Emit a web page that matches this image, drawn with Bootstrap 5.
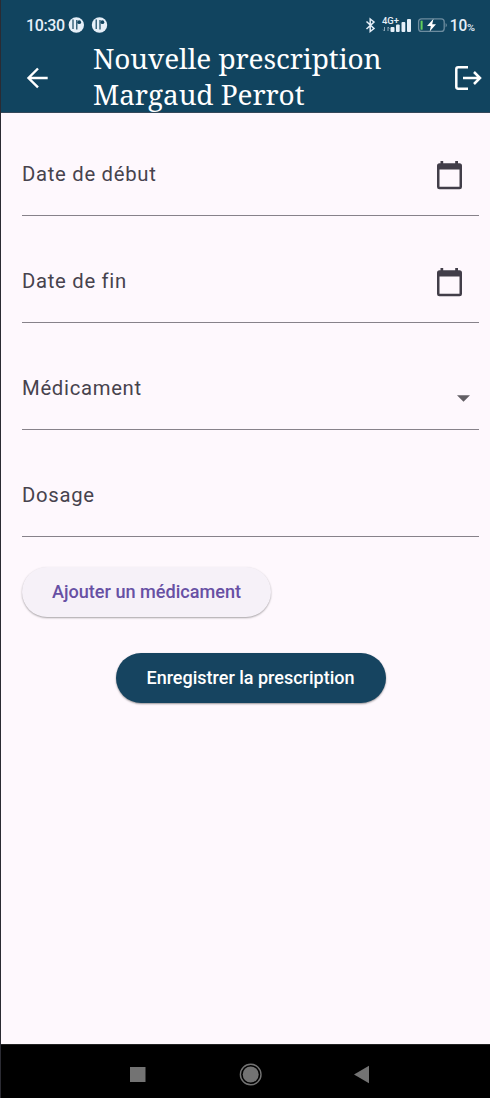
<!DOCTYPE html>
<html lang="fr">
<head>
<meta charset="utf-8">
<meta name="viewport" content="width=device-width, initial-scale=1">
<title>Nouvelle prescription</title>
<link href="https://cdn.jsdelivr.net/npm/bootstrap@5.3.0/dist/css/bootstrap.min.css" rel="stylesheet">
<style>
  body { background: #fef8fd; font-family: Roboto, "Liberation Sans", sans-serif; }
  .screen { height: 1098px; border-left: 1px solid #2b2b33; overflow: hidden; }
  .app-header { background: #11445f; height: 113px; color: #fff; border-bottom: 1px solid #34485a; }
  .status { height: 42px; padding: 9px 15px 0 25px; color: #e6eff8; font-size: 16px; font-weight: 500; line-height: 34px; }
  .clock { width: 42px; white-space: nowrap; letter-spacing: -.4px; }
  .toolbar { height: 70px; padding-left: 23px; padding-right: 8px; }
  .app-title { font-family: "Noto Serif", "DejaVu Serif Condensed", "DejaVu Serif", serif; font-stretch: condensed; font-size: 28px; line-height: 36px; letter-spacing: -.08px; font-weight: 400; margin: -2px 0 0 43px; white-space: nowrap; }
  form { padding: 21px 11px 0 21px; }
  .field { height: 82px; margin-bottom: 25px; border-bottom: 1.5px solid #87828a; color: #47434d; }
  .field label { font-size: 20.3px; line-height: 28px; letter-spacing: .7px; margin-top: -1px; }
  .date-icon { margin-right: 15.5px; }
  .caret { margin: 20px 9px 0 0; }
  .pill { border: 0; border-radius: 26px; height: 50px; padding: 0; font-weight: 500; line-height: 50px; white-space: nowrap; }
  .pill-add { width: 249px; margin-top: 30px; font-size: 18.1px; background: #f6f1f8; color: #6750a4; box-shadow: 0 1px 2px rgba(0,0,0,.35); }
  .pill-save { width: 270px; margin: 36px 0 0; font-size: 18px; background: #164460; color: #fff; box-shadow: 0 1px 2px rgba(0,0,0,.4); }
  .nav-keys { height: 54px; background: #000; border-top: 1px solid #222; }
</style>
</head>
<body>
<div class="screen d-flex flex-column">
  <header class="app-header flex-shrink-0">
    <div class="status d-flex">
      <span class="clock">10:30</span>
      <svg width="40" height="34" viewBox="0 0 40 34" fill="#e6eff8">
        <circle cx="8.3" cy="16" r="7.7"/><circle cx="31.5" cy="16" r="7.7"/>
        <g fill="none" stroke="#11445f" stroke-width="1.2"><path d="M5 10.5V20M8.8 11V20.5M28.2 10.5V20M32 11V20.5"/></g>
        <g fill="#11445f"><circle cx="11.2" cy="13.2" r="1.9"/><circle cx="34.4" cy="13.2" r="1.9"/></g>
      </svg>
      <svg class="ms-auto" width="84" height="34" viewBox="365 9 84 34">
        <path d="M366.5 21.5L374 28.5L370.2 31.5V19L374 22L366.5 29" fill="none" stroke="#e6eff8" stroke-width="1.5"/>
        <text x="382" y="23.8" font-size="9" font-weight="500" textLength="17" lengthAdjust="spacingAndGlyphs" fill="#e6eff8">4G+</text>
        <path d="M384.5 27V31M383.2 29.7L384.5 31M388 31V27M388 27L389.3 28.5" stroke="#8ca6b7" fill="none"/>
        <g fill="#e6eff8"><rect x="390.5" y="27" width="4" height="5" rx="1"/><rect x="396" y="24.5" width="3.7" height="7.5" rx="1"/><rect x="401.5" y="22" width="3.8" height="10" rx="1"/><rect x="407" y="19" width="4" height="13" rx="1"/></g>
        <rect x="418.6" y="18.8" width="25.6" height="12.6" rx="3" fill="none" stroke="#6d8c9f" stroke-width="1.3"/>
        <rect x="420.6" y="20.7" width="2" height="9" fill="#62cf5c"/>
        <path d="M445.7 23Q447.8 25 445.7 27.5Z" fill="#7f9bac"/>
        <path d="M433.5 18.8L427 26H430.8L429.7 31.6L436 24.2H432.2Z" fill="#fff"/>
      </svg>
      <svg width="26" height="34" viewBox="449 9 26 34" fill="#e6eff8" font-weight="500"><text x="449.8" y="31.2" font-size="17" textLength="17.5" lengthAdjust="spacingAndGlyphs">10</text><text x="467" y="31.2" font-size="9.5" textLength="8" lengthAdjust="spacingAndGlyphs">%</text></svg>
    </div>
    <div class="toolbar d-flex align-items-center">
      <svg width="26" height="26" viewBox="0 0 26 26" fill="none" stroke="#fff" stroke-width="2.4"><path d="M23.7 14H4.5M14 4.5L4.5 14L14 23.3"/></svg>
      <h1 class="app-title">Nouvelle prescription<br>Margaud Perrot</h1>
      <svg class="ms-auto" width="28" height="26" viewBox="0 0 28 26" fill="none" stroke="#fff" stroke-width="2.5"><path d="M14 3.3H4.2Q2.3 3.3 2.3 5.2V22.8Q2.3 24.7 4.2 24.7H14M9 14H26M20 8L26 14L20 20"/></svg>
    </div>
  </header>
  <form class="flex-grow-1">
    <div class="field d-flex align-items-center justify-content-between">
      <label>Date de début</label>
      <svg class="date-icon" width="29" height="30" viewBox="0 0 29 30" fill="#423e49"><path fill-rule="evenodd" d="M5.5 1H8.2V3.2H20.2V1H23V3.2H24.5Q27 3.2 27 5.7V27Q27 29.3 24.5 29.3H4.5Q2 29.3 2 27V5.7Q2 3.2 4.5 3.2H5.5ZM4.5 9.5V26.8H24.5V9.5Z"/></svg>
    </div>
    <div class="field d-flex align-items-center justify-content-between">
      <label>Date de fin</label>
      <svg class="date-icon" width="29" height="30" viewBox="0 0 29 30" fill="#423e49"><path fill-rule="evenodd" d="M5.5 1H8.2V3.2H20.2V1H23V3.2H24.5Q27 3.2 27 5.7V27Q27 29.3 24.5 29.3H4.5Q2 29.3 2 27V5.7Q2 3.2 4.5 3.2H5.5ZM4.5 9.5V26.8H24.5V9.5Z"/></svg>
    </div>
    <div class="field d-flex align-items-center justify-content-between">
      <label>Médicament</label>
      <svg class="caret" width="13" height="7" viewBox="0 0 13 7"><path d="M0 .3H13L6.5 6.7Z" fill="#625f64"/></svg>
    </div>
    <div class="field d-flex align-items-center mb-0"><label>Dosage</label></div>
    <button type="button" class="btn pill pill-add d-block">Ajouter un médicament</button>
    <div class="d-flex justify-content-center"><button type="button" class="btn pill pill-save">Enregistrer la prescription</button></div>
  </form>
  <nav class="nav-keys flex-shrink-0">
    <svg class="d-block" width="489" height="53" viewBox="1 1045 489 53" fill="#737373">
      <rect x="130" y="1067" width="15.5" height="15"/>
      <circle cx="250.7" cy="1074.5" r="8"/><circle cx="250.7" cy="1074.5" r="10.3" fill="none" stroke="#737373" stroke-width="1.4"/>
      <path d="M354 1074.5L369 1065.8V1083.2Z"/>
    </svg>
  </nav>
</div>
<script src="https://cdn.jsdelivr.net/npm/bootstrap@5.3.0/dist/js/bootstrap.bundle.min.js"></script>
</body>
</html>
